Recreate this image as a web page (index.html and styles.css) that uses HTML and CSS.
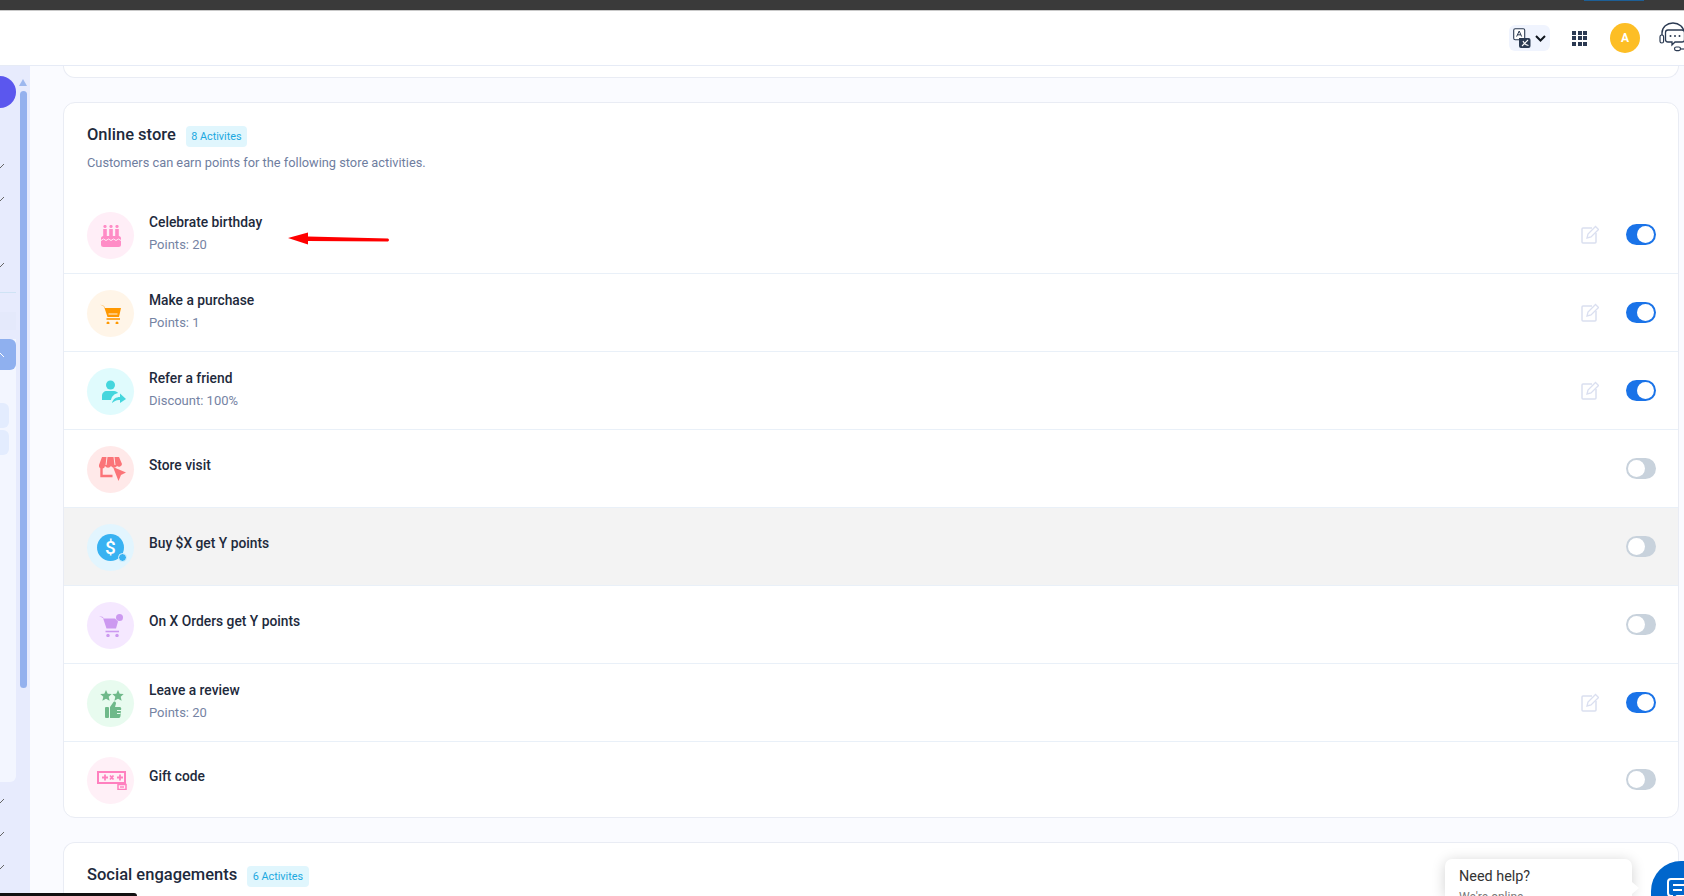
FILE: index.html
```html
<!DOCTYPE html>
<html lang="en">
<head>
    <meta charset="UTF-8">
    <meta name="viewport" content="width=device-width, initial-scale=1.0">
    <title>Online store activities</title>
    <link rel="stylesheet" href="styles.css">
</head>
<body>
    <div class="topbar"><span class="topbar-tab"></span></div>

    <header class="header">
        <button class="lang-btn">
            <svg width="18" height="20" viewBox="0 0 18 20">
                <rect x="0.7" y="0.7" width="11" height="11" rx="1.5" fill="#fff" stroke="#2b3a52" stroke-width="1.1"/>
                <path d="M6 10h9.5a2 2 0 0 1 2 2v6a2 2 0 0 1-2 2H8a2 2 0 0 1-2-2z" fill="#2b3a52"/>
                <path d="M3.6 8.6 6.2 3l2.5 5.6M4.5 6.8h3.4" fill="none" stroke="#2b3a52" stroke-width="1"/>
                <path d="M9 18l6-6M10 13c1 2.5 3 4 5.5 4.5" fill="none" stroke="#fff" stroke-width="1.1"/>
            </svg>
            <svg width="11" height="7" viewBox="0 0 11 7"><path d="M1 1l4.500 4.500L10 1" fill="none" stroke="#10161f" stroke-width="2"/></svg>
        </button>
        <div class="apps-grid">
            <span></span><span></span><span></span>
            <span></span><span></span><span></span>
            <span></span><span></span><span></span>
        </div>
        <div class="avatar">A</div>
        <svg class="support-icon" width="32" height="32" viewBox="0 0 32 32">
            <path d="M3 14V11C3 5 8 1 14 1s11 4 11 10v2" fill="none" stroke="#2b3a52" stroke-width="1.4"/>
            <rect x="1" y="13" width="3.6" height="8" rx="1.8" fill="#fff" stroke="#2b3a52" stroke-width="1.2"/>
            <path d="M9 8h14a2.500 2.500 0 0 1 2.500 2.500v7A2.500 2.500 0 0 1 23 20h-7l-3 3v-3H9a2.500 2.500 0 0 1-2.500-2.500v-7A2.500 2.500 0 0 1 9 8z" fill="#fff" stroke="#2b3a52" stroke-width="1.3"/>
            <circle cx="11.500" cy="14" r="1" fill="#2b3a52"/><circle cx="16" cy="14" r="1" fill="#2b3a52"/><circle cx="20.500" cy="14" r="1" fill="#2b3a52"/>
            <rect x="15.500" y="25" width="6" height="3.600" rx="1.800" fill="#fff" stroke="#2b3a52" stroke-width="1.2"/>
            <path d="M21.500 27H32" stroke="#2b3a52" stroke-width="1.2"/>
        </svg>
    </header>

    <div class="layout">
        <aside class="sidebar">
            <div class="side-col">
                <div class="side-logo"></div>
                <div class="side-rows first">
                    <div class="side-row"><svg width="4" height="6" viewBox="0 0 4 6"><path d="M0 5l4-4" stroke="#666" stroke-width="1"/></svg></div>
                    <div class="side-row"><svg width="4" height="6" viewBox="0 0 4 6"><path d="M0 5l4-4" stroke="#666" stroke-width="1"/></svg></div>
                    <div class="side-row"></div>
                    <div class="side-row"><svg width="4" height="6" viewBox="0 0 4 6"><path d="M0 5l4-4" stroke="#666" stroke-width="1"/></svg></div>
                </div>
                <div class="side-divider"></div>
                <div class="side-hover"></div>
                <div class="side-panel">
                    <div class="side-active"><svg width="4" height="6" viewBox="0 0 4 6"><path d="M0 1l4 4" stroke="#fff" stroke-width="1"/></svg></div>
                    <div class="side-sub first"></div>
                    <div class="side-sub"></div>
                </div>
                <div class="side-rows last">
                    <div class="side-row"><svg width="4" height="6" viewBox="0 0 4 6"><path d="M0 5l4-4" stroke="#666" stroke-width="1"/></svg></div>
                    <div class="side-row"><svg width="4" height="6" viewBox="0 0 4 6"><path d="M0 5l4-4" stroke="#666" stroke-width="1"/></svg></div>
                    <div class="side-row"><svg width="4" height="6" viewBox="0 0 4 6"><path d="M0 5l4-4" stroke="#666" stroke-width="1"/></svg></div>
                </div>
            </div>
            <div class="side-scroll">
                <div class="scroll-arrow"></div>
                <div class="scroll-thumb"></div>
            </div>
        </aside>

        <main class="main">
            <div class="card card-end"></div>

            <section class="card">
                <div class="card-head">
                    <h2 class="card-title">Online store</h2>
                    <span class="badge">8 Activites</span>
                </div>
                <p class="card-desc">Customers can earn points for the following store activities.</p>

                <div class="activity">
                    <div class="activity-icon bg-pink">
                        <svg width="20" height="22" viewBox="0 0 20 22">
                            <circle cx="4" cy="1.500" r="1.600" fill="#ff8cc6"/><circle cx="10" cy="1.500" r="1.600" fill="#ff8cc6"/><circle cx="16" cy="1.500" r="1.600" fill="#ff8cc6"/>
                            <rect x="2.200" y="4" width="3.600" height="8" fill="#ff8cc6"/><rect x="8.200" y="4" width="3.600" height="8" fill="#ff8cc6"/><rect x="14.200" y="4" width="3.600" height="8" fill="#ff8cc6"/>
                            <rect x="0" y="11" width="20" height="11" rx="2.500" fill="#ff8cc6"/>
                            <path d="M0 15.500l2.500-1.500 2.500 1.500 2.500-1.500 2.500 1.500 2.500-1.500 2.500 1.500 2.500-1.500 2.500 1.500" fill="none" stroke="#ffeef7" stroke-width="1"/>
                        </svg>
                    </div>
                    <div class="activity-text">
                        <div class="activity-title">Celebrate birthday</div>
                        <div class="activity-sub">Points: 20</div>
                    </div>
                    <div class="activity-actions">
                        <svg class="edit-icon" width="18" height="19" viewBox="0 0 18 19">
                            <path d="M11 3H2a1 1 0 0 0-1 1v13a1 1 0 0 0 1 1h12a1 1 0 0 0 1-1V8" fill="none" stroke="#dadff0" stroke-width="1.500"/>
                            <path d="M6 13l1-4 7.500-7.500 3 3L10 12z" fill="none" stroke="#dadff0" stroke-width="1.300"/>
                        </svg>
                        <div class="toggle on"></div>
                    </div>
                    <svg class="red-arrow" width="102" height="14" viewBox="0 0 102 14">
                        <path d="M0 6L20 0.500V4.500L100 6.500Q102 8 100 9.500L20 9V12.500z" fill="#f00"/>
                    </svg>
                </div>

                <div class="activity">
                    <div class="activity-icon bg-orange">
                        <svg width="21" height="20" viewBox="0 0 21 20">
                            <path d="M0 0.500l4 1.500 1 2H21l-2 9H7.500L4 2.500" fill="#ff9800"/>
                            <path d="M6.500 15H20" stroke="#ff9800" stroke-width="1.600"/>
                            <circle cx="8" cy="19" r="1.500" fill="#ff9800"/><circle cx="17" cy="19" r="1.500" fill="#ff9800"/>
                            <path d="M8.500 10h9" stroke="#fff5e8" stroke-width="1"/>
                        </svg>
                    </div>
                    <div class="activity-text">
                        <div class="activity-title">Make a purchase</div>
                        <div class="activity-sub">Points: 1</div>
                    </div>
                    <div class="activity-actions">
                        <svg class="edit-icon" width="18" height="19" viewBox="0 0 18 19">
                            <path d="M11 3H2a1 1 0 0 0-1 1v13a1 1 0 0 0 1 1h12a1 1 0 0 0 1-1V8" fill="none" stroke="#dadff0" stroke-width="1.500"/>
                            <path d="M6 13l1-4 7.500-7.500 3 3L10 12z" fill="none" stroke="#dadff0" stroke-width="1.300"/>
                        </svg>
                        <div class="toggle on"></div>
                    </div>
                </div>

                <div class="activity">
                    <div class="activity-icon bg-teal">
                        <svg width="31" height="23" viewBox="-7 0 31 23">
                            <circle cx="8.500" cy="5" r="4.500" fill="#45d6dd"/>
                            <path d="M0 20v-4c0-3 2-5 5-5h7c2 0 3.500 1 4 2-4 1-6 3-7 7z" fill="#45d6dd"/>
                            <path d="M10 23c1-4 4-6 8-6v-3.500l6 5.500-6 4v-3c-3-.5-6 1-8 3z" fill="#45d6dd"/>
                        </svg>
                    </div>
                    <div class="activity-text">
                        <div class="activity-title">Refer a friend</div>
                        <div class="activity-sub">Discount: 100%</div>
                    </div>
                    <div class="activity-actions">
                        <svg class="edit-icon" width="18" height="19" viewBox="0 0 18 19">
                            <path d="M11 3H2a1 1 0 0 0-1 1v13a1 1 0 0 0 1 1h12a1 1 0 0 0 1-1V8" fill="none" stroke="#dadff0" stroke-width="1.500"/>
                            <path d="M6 13l1-4 7.500-7.500 3 3L10 12z" fill="none" stroke="#dadff0" stroke-width="1.300"/>
                        </svg>
                        <div class="toggle on"></div>
                    </div>
                </div>

                <div class="activity">
                    <div class="activity-icon bg-red">
                        <svg width="31" height="25" viewBox="-3 0 31 25">
                            <path d="M4 0H21l3 7a3 3 0 0 1-5 2 3.500 3.500 0 0 1-6 0 3.500 3.500 0 0 1-6 0 3 3 0 0 1-6-1z" fill="#fb7478"/>
                            <path d="M9 0l-1 8M16 0l1 8" stroke="#ffe9e9" stroke-width="1"/>
                            <path d="M3.500 10v9h11" fill="none" stroke="#fb7478" stroke-width="2.400"/>
                            <path d="M15 10l13 5.500-5 2.500-2.500 6z" fill="#fb7478"/>
                        </svg>
                    </div>
                    <div class="activity-text">
                        <div class="activity-title">Store visit</div>
                    </div>
                    <div class="activity-actions">
                        <div class="toggle"></div>
                    </div>
                </div>

                <div class="activity selected">
                    <div class="activity-icon bg-blue">
                        <div class="dollar">$<span class="dollar-dot"></span></div>
                    </div>
                    <div class="activity-text">
                        <div class="activity-title">Buy $X get Y points</div>
                    </div>
                    <div class="activity-actions">
                        <div class="toggle"></div>
                    </div>
                </div>

                <div class="activity">
                    <div class="activity-icon bg-purple">
                        <svg width="24" height="23" viewBox="0 0 24 23">
                            <path d="M0 2l4 1 .5 1.500H16l3 3-2 7H7.500L4 4" fill="#cc99f0"/>
                            <circle cx="20.500" cy="3.500" r="3.500" fill="#cc99f0"/>
                            <path d="M6.500 17.500H20" stroke="#cc99f0" stroke-width="1.600"/>
                            <circle cx="9" cy="21.500" r="1.700" fill="#cc99f0"/><circle cx="18" cy="21.500" r="1.700" fill="#cc99f0"/>
                        </svg>
                    </div>
                    <div class="activity-text">
                        <div class="activity-title">On X Orders get Y points</div>
                    </div>
                    <div class="activity-actions">
                        <div class="toggle"></div>
                    </div>
                </div>

                <div class="activity">
                    <div class="activity-icon bg-green">
                        <svg width="27" height="28" viewBox="-3 0 27 28">
                            <path d="M6 0l1.700 3.700 4 .4-3 2.700.9 4L6 8.800 2.400 10.800l.9-4-3-2.700 4-.4z" fill="#6fb98a"/>
                            <path d="M18 0l1.700 3.700 4 .4-3 2.700.9 4L18 8.800l-3.600 2 .9-4-3-2.700 4-.4z" fill="#6fb98a"/>
                            <rect x="5" y="17" width="4" height="11" rx="1" fill="#6fb98a"/>
                            <path d="M10 17l3.500-5c1.500-1 2.500 0 2.500 1.500L15 17h4.500c2 0 2 2 1.500 3l-.5 6c-.2 1.500-1 2-2 2H10z" fill="#6fb98a"/>
                            <path d="M17 20.500h4M17 23.500h3.500" stroke="#e8fbef" stroke-width="1"/>
                        </svg>
                    </div>
                    <div class="activity-text">
                        <div class="activity-title">Leave a review</div>
                        <div class="activity-sub">Points: 20</div>
                    </div>
                    <div class="activity-actions">
                        <svg class="edit-icon" width="18" height="19" viewBox="0 0 18 19">
                            <path d="M11 3H2a1 1 0 0 0-1 1v13a1 1 0 0 0 1 1h12a1 1 0 0 0 1-1V8" fill="none" stroke="#dadff0" stroke-width="1.500"/>
                            <path d="M6 13l1-4 7.500-7.500 3 3L10 12z" fill="none" stroke="#dadff0" stroke-width="1.300"/>
                        </svg>
                        <div class="toggle on"></div>
                    </div>
                </div>

                <div class="activity">
                    <div class="activity-icon bg-rose">
                        <svg width="33" height="19" viewBox="-3 0 33 19">
                            <rect x="1" y="1" width="27" height="11" fill="none" stroke="#ff80bf" stroke-width="2"/>
                            <path d="M5 6.500h6M8 3.500v6M20 6.500h6M23 3.500v6" stroke="#ff80bf" stroke-width="1.800"/>
                            <path d="M13 4.500l3.500 4M16.500 4.500l-3.500 4" stroke="#ff80bf" stroke-width="1.800"/>
                            <rect x="21" y="13.500" width="8" height="5" fill="#fff0f7" stroke="#ff80bf" stroke-width="1.500"/>
                            <path d="M23 16h4" stroke="#ff80bf" stroke-width="1.400"/>
                        </svg>
                    </div>
                    <div class="activity-text">
                        <div class="activity-title">Gift code</div>
                    </div>
                    <div class="activity-actions">
                        <div class="toggle"></div>
                    </div>
                </div>
            </section>

            <section class="card card-open">
                <div class="card-head">
                    <h2 class="card-title">Social engagements</h2>
                    <span class="badge">6 Activites</span>
                </div>
            </section>
        </main>
    </div>

    <div class="help-tip">
        <div class="help-title">Need help?</div>
        <div class="help-sub">We're online</div>
    </div>
    <div class="help-arrow"></div>
    <div class="help-btn">
        <svg width="24" height="24" viewBox="0 0 24 24">
            <path d="M4 1h18a3 3 0 0 1 3 3v11a3 3 0 0 1-3 3H10l-5 4v-4H4a3 3 0 0 1-3-3V4a3 3 0 0 1 3-3z" fill="none" stroke="#fff" stroke-width="2"/>
            <path d="M6 7h13M6 12h9" stroke="#fff" stroke-width="2"/>
        </svg>
    </div>
    <div class="bottom-strip"></div>
</body>
</html>
```

FILE: styles.css
```css
* {
    box-sizing: border-box;
}
html, body {
    height: 100%;
}
body {
    margin: 0;
    font-family: Roboto, "Liberation Sans", sans-serif;
    color: #1e2a3c;
    background: #fafbff;
    overflow: hidden;
    display: flex;
    flex-direction: column;
}
.topbar {
    height: 11px;
    flex: none;
    background: #3a3a3a;
    border-bottom: 1px solid #c9c9c9;
    display: flex;
}
.topbar-tab {
    width: 60px;
    height: 1px;
    margin-left: 1584px;
    background: #1d5f96;
}
.header {
    height: 55px;
    flex: none;
    background: white;
    border-bottom: 1px solid #e6ebf6;
    display: flex;
    align-items: center;
    justify-content: flex-end;
    overflow: hidden;
}
.lang-btn {
    width: 41px;
    height: 26px;
    border: none;
    border-radius: 6px;
    background: #f0f4fe;
    padding: 0 0 0 4px;
    display: flex;
    align-items: center;
    gap: 4px;
}
.apps-grid {
    width: 15px;
    height: 15px;
    margin-left: 22px;
    display: grid;
    grid-template-columns: repeat(3, 4px);
    grid-auto-rows: 4px;
    gap: 1.500px;
}
.apps-grid span {
    background: #2b3a52;
}
.avatar {
    width: 30px;
    height: 30px;
    margin-left: 23px;
    border-radius: 50%;
    background: #fdbe25;
    color: white;
    font-size: 12px;
    font-weight: 700;
    display: flex;
    align-items: center;
    justify-content: center;
}
.support-icon {
    flex: none;
    margin-left: 19px;
    margin-right: -7px;
}
.layout {
    flex: 1;
    display: flex;
    min-height: 0;
    overflow: hidden;
}
.sidebar {
    width: 30px;
    flex: none;
    background: #e7ebfd;
    display: flex;
}
.side-col {
    width: 16px;
    flex: none;
}
.side-logo {
    width: 32px;
    height: 32px;
    margin: 10px 0 0 -16px;
    clip-path: inset(0 0 0 16px);
    border-radius: 50%;
    background: #5b57ee;
}
.side-rows.first {
    margin-top: 41px;
}
.side-rows.last {
    margin-top: 2px;
}
.side-row {
    height: 33px;
    display: flex;
    align-items: center;
}
.side-divider {
    height: 1px;
    margin-top: 11px;
    background: #cfe3f5;
}
.side-hover {
    height: 18px;
    margin-top: 19px;
    background: #e4e9fb;
}
.side-panel {
    height: 443px;
    margin-top: 9px;
    background: #f3f6ff;
    border-bottom-right-radius: 6px;
}
.side-active {
    height: 31px;
    background: #8fb0ef;
    border-radius: 0 6px 6px 0;
    display: flex;
    align-items: center;
}
.side-sub {
    width: 9px;
    height: 25px;
    margin-top: 2px;
    background: #e3ecfe;
    border-radius: 0 6px 6px 0;
}
.side-sub.first {
    margin-top: 33px;
}
.side-scroll {
    width: 9px;
    margin-left: 3px;
    padding-top: 13px;
}
.scroll-arrow {
    width: 0;
    height: 0;
    margin-bottom: 5px;
    border-left: 4.500px solid transparent;
    border-right: 4.500px solid transparent;
    border-bottom: 7px solid #9db8ee;
}
.scroll-thumb {
    width: 7px;
    height: 597px;
    margin-left: 1px;
    background: #94b1ee;
    border-radius: 4px;
}
.main {
    flex: 1;
    min-width: 0;
    padding: 0 5px 0 33px;
    display: flex;
    flex-direction: column;
    gap: 24px;
}
.card {
    background: white;
    border: 1px solid #e9ecf4;
    border-radius: 12px;
    flex: none;
}
.card-end {
    height: 12px;
    border-top: none;
    border-radius: 0 0 12px 12px;
}
.card-open {
    flex: 1;
    min-height: 0;
    overflow: hidden;
    border-bottom: none;
    border-radius: 12px 12px 0 0;
}
.card-head {
    padding: 22px 23px 0;
    display: flex;
    align-items: flex-start;
    gap: 10px;
}
.card-title {
    margin: 0;
    font-size: 16.500px;
    line-height: 20px;
    font-weight: 500;
}
.badge {
    height: 21px;
    margin-top: 1px;
    padding: 0 5.500px;
    border-radius: 4px;
    background: #e0f6fd;
    color: #1ba8e0;
    font-size: 10.800px;
    line-height: 22px;
}
.card-desc {
    margin: 6px 0 23px;
    padding: 0 23px;
    font-size: 12.800px;
    line-height: 20px;
    color: #6f7e9f;
}
.activity {
    position: relative;
    height: 78px;
    padding: 0 22px 0 23px;
    display: flex;
    align-items: center;
    gap: 15px;
    border-bottom: 1px solid #e9f0f8;
}
.activity:last-child {
    height: 75px;
    border-bottom: none;
}
.activity.selected {
    background: #f3f3f3;
}
.activity-icon {
    width: 47px;
    height: 47px;
    margin-top: 2px;
    border-radius: 50%;
    flex: none;
    display: flex;
    align-items: center;
    justify-content: center;
}
.bg-pink { background: #ffeef7; }
.bg-orange { background: #fff5e8; }
.bg-teal { background: #e0fbfd; }
.bg-red { background: #ffe9e9; }
.bg-blue { background: #e2f5fe; }
.bg-purple { background: #f5e8ff; }
.bg-green { background: #e8fbef; }
.bg-rose { background: #fff0f7; }
.activity-text {
    padding-bottom: 2px;
    margin-bottom: 2px;
}
.activity-title {
    font-size: 13.800px;
    line-height: 20px;
    font-weight: 500;
    margin-bottom: 3px;
}
.activity-sub {
    font-size: 13px;
    line-height: 20px;
    margin-bottom: -2px;
    color: #7583a3;
}
.activity-actions {
    margin-left: auto;
    display: flex;
    align-items: center;
    gap: 27px;
}
.toggle {
    width: 30px;
    height: 21px;
    border-radius: 11px;
    background: #c8d2dc;
    padding: 2px;
    display: flex;
}
.toggle::after {
    content: "";
    width: 17px;
    height: 17px;
    border-radius: 50%;
    background: white;
}
.toggle.on {
    background: #1a73e8;
    justify-content: flex-end;
}
.dollar {
    position: relative;
    width: 27px;
    height: 27px;
    border-radius: 50%;
    background: #38b2f2;
    color: white;
    font-size: 19px;
    font-weight: 500;
    display: flex;
    align-items: center;
    justify-content: center;
}
.dollar-dot {
    position: absolute;
    right: -3px;
    bottom: -1px;
    width: 9px;
    height: 9px;
    border-radius: 50%;
    background: #38b2f2;
    border: 1.500px solid #e2f5fe;
}
.red-arrow {
    position: absolute;
    left: 224px;
    top: 36px;
}
.help-tip {
    position: absolute;
    left: 1445px;
    top: 859px;
    width: 187px;
    height: 37px;
    padding: 9px 14px 0;
    overflow: hidden;
    background: white;
    border-radius: 7px 7px 0 0;
    box-shadow: 0 2px 14px rgba(0,0,0,0.18);
}
.help-arrow {
    position: absolute;
    left: 1632px;
    top: 882px;
    border-left: 7px solid white;
    border-top: 6px solid transparent;
    border-bottom: 6px solid transparent;
}
.help-title {
    font-size: 14.400px;
    line-height: 18px;
    color: #333;
}
.help-sub {
    margin-top: 3px;
    font-size: 12px;
    line-height: 16px;
    color: #777;
}
.help-btn {
    position: absolute;
    left: 1651px;
    top: 861px;
    width: 33px;
    height: 35px;
    overflow: hidden;
    padding: 17px 0 0 16px;
    border-radius: 30px 0 0 0;
    background: #0066cc;
}
.bottom-strip {
    position: absolute;
    left: 0;
    bottom: 0;
    width: 137px;
    height: 3px;
    background: #111;
    border-top-right-radius: 4px;
}
```
